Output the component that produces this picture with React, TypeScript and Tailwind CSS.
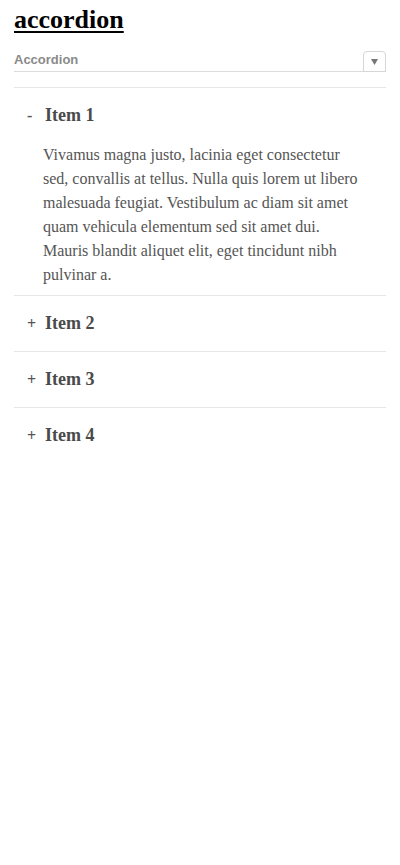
import React, { useState } from "react";

const items = [
  {
    title: "Item 1",
    body: "Vivamus magna justo, lacinia eget consectetur sed, convallis at tellus. Nulla quis lorem ut libero malesuada feugiat. Vestibulum ac diam sit amet quam vehicula elementum sed sit amet dui. Mauris blandit aliquet elit, eget tincidunt nibh pulvinar a.",
  },
  { title: "Item 2", body: "Curabitur arcu erat, accumsan id imperdiet et, porttitor at sem." },
  { title: "Item 3", body: "Curabitur non nulla sit amet nisl tempus convallis quis ac lectus." },
  { title: "Item 4", body: "Donec rutrum congue leo eget malesuada." },
];

export default function App() {
  const [open, setOpen] = useState<number>(0);
  return (
    <div className="min-h-[865px] bg-white px-[14px] pt-[5px]" style={{ fontFamily: "Georgia, 'Liberation Serif', serif" }}>
      <h1 className="text-[26px] font-bold leading-[30px] text-black underline decoration-[2px] underline-offset-[3px]">
        accordion
      </h1>
      <div className="mt-[16px] flex items-end border-b border-[#dcdcdc]">
        <div
          className="flex-1 pb-[3px] text-[13px] font-bold leading-[16px] text-[#8a8a8a]"
          style={{ fontFamily: "'Liberation Sans', Arial, sans-serif" }}
        >
          Accordion
        </div>
        <div className="mb-[-1px] flex h-[21px] w-[23px] items-center justify-center rounded-t-[4px] border border-[#d6d6d6] bg-white">
          <svg width="7" height="6" viewBox="0 0 7 6">
            <path d="M0 0 L7 0 L3.5 6 Z" fill="#777" />
          </svg>
        </div>
      </div>
      <div className="mt-[15px] border-t border-[#e6e6e6]">
        {items.map((it, i) => (
          <div key={it.title} className={i > 0 ? "border-t border-[#e6e6e6]" : ""}>
            <button
              className="flex h-[55px] w-full items-center text-left"
              onClick={() => setOpen(open === i ? -1 : i)}
            >
              <span className="w-[31px] pl-[13px] text-[16px] font-bold text-[#555]">{open === i ? "-" : "+"}</span>
              <span className="text-[18px] font-bold text-[#4a4a4a]">{it.title}</span>
            </button>
            {open === i && (
              <p className="mb-[8px] pl-[29px] pr-[28px] text-[16px] leading-[24px] text-[#555]">
                {it.body}
              </p>
            )}
          </div>
        ))}
      </div>
    </div>
  );
}
